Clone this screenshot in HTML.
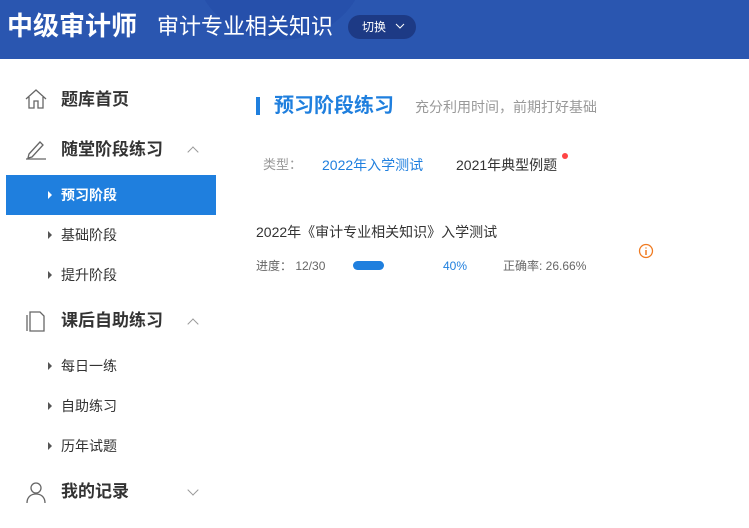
<!DOCTYPE html>
<html><head><meta charset="utf-8"><style>
*{margin:0;padding:0;box-sizing:border-box}
body{width:749px;height:528px;overflow:hidden;background:#fff;font-family:"Liberation Sans","Noto Sans CJK SC",sans-serif;position:relative}
.hdr{position:absolute;left:0;top:0;width:749px;height:59px;background:#2a56b0;overflow:hidden}
.hdr .c1{position:absolute;left:195px;top:-110px;width:170px;height:150px;border-radius:50%;background:#2650ab}
.t1{position:absolute;left:7px;top:9px;color:#fff;font-size:26px;font-weight:bold;line-height:34px}
.t2{position:absolute;left:157px;top:11px;color:#fff;font-size:22px;line-height:32px}
.sw{position:absolute;left:348px;top:15px;width:68px;height:24px;border-radius:12px;background:#1d3a85;color:#fff;font-size:12px;line-height:24px;padding-left:14px}
.sw svg{position:absolute;left:47px;top:8px}
.it{position:absolute;left:0;font-size:17px;color:#333;font-weight:bold;line-height:24px}
.sub{position:absolute;left:6px;width:210px;height:40px;font-size:14px;color:#333;line-height:40px;padding-left:55px}
.sub:before{content:"";position:absolute;left:42px;top:16px;border-left:4px solid #555;border-top:4px solid transparent;border-bottom:4px solid transparent}
.act{background:#1f7fde;color:#fff;font-weight:bold}
.act:before{border-left-color:#fff}
.car{position:absolute;left:189px;width:8px;height:8px;border-left:1px solid #999;border-top:1px solid #999}
</style></head><body>
<div class="hdr"><div class="c1"></div>
<div class="t1">中级审计师</div><div class="t2">审计专业相关知识</div>
<div class="sw">切换<svg width="10" height="7"><path d="M1 1l4 4 4-4" stroke="#fff" fill="none"/></svg></div></div>

<svg style="position:absolute;left:24px;top:88px" width="24" height="22"><path d="M2 11L12 2l10 9M5 9v11h5v-7h4v7h5V9" fill="none" stroke="#666" stroke-width="1.3"/></svg>
<div class="it" style="left:61px;top:88px">题库首页</div>
<svg style="position:absolute;left:24px;top:138px" width="24" height="22"><path d="M5 16l11-12 3 3-11 12-4 1z M2 21h20" fill="none" stroke="#666" stroke-width="1.3"/></svg>
<div class="it" style="left:61px;top:138px">随堂阶段练习</div>
<div class="car" style="top:148px;transform:rotate(45deg)"></div>
<div class="sub act" style="top:175px">预习阶段</div>
<div class="sub" style="top:215px">基础阶段</div>
<div class="sub" style="top:255px">提升阶段</div>
<svg style="position:absolute;left:24px;top:310px" width="24" height="22"><path d="M6 2h10l4 4v15H6z M3 5v16" fill="none" stroke="#666" stroke-width="1.3"/></svg>
<div class="it" style="left:61px;top:309px">课后自助练习</div>
<div class="car" style="top:320px;transform:rotate(45deg)"></div>
<div class="sub" style="top:346px">每日一练</div>
<div class="sub" style="top:386px">自助练习</div>
<div class="sub" style="top:426px">历年试题</div>
<svg style="position:absolute;left:24px;top:480px" width="24" height="24"><circle cx="12" cy="8" r="5" fill="none" stroke="#666" stroke-width="1.3"/><path d="M3 23c0-6 4-9 9-9s9 3 9 9" fill="none" stroke="#666" stroke-width="1.3"/></svg>
<div class="it" style="left:61px;top:480px">我的记录</div>
<div class="car" style="top:486px;transform:rotate(225deg)"></div>

<div style="position:absolute;left:256px;top:97px;width:4px;height:18px;background:#1f7fde"></div>
<div style="position:absolute;left:274px;top:93px;font-size:20px;font-weight:bold;color:#1f7fde;line-height:27px">预习阶段练习</div>
<div style="position:absolute;left:415px;top:98px;font-size:14px;color:#999;line-height:19px">充分利用时间，前期打好基础</div>
<div style="position:absolute;left:263px;top:156px;font-size:13px;color:#999;line-height:18px">类型：</div>
<div style="position:absolute;left:322px;top:156px;font-size:14px;color:#1f7fde;line-height:19px">2022年入学测试</div>
<div style="position:absolute;left:456px;top:156px;font-size:14px;color:#333;line-height:19px">2021年典型例题</div>
<div style="position:absolute;left:562px;top:153px;width:6px;height:6px;border-radius:50%;background:#f44"></div>
<div style="position:absolute;left:256px;top:223px;font-size:14px;color:#333;line-height:19px">2022年《审计专业相关知识》入学测试</div>
<div style="position:absolute;left:256px;top:258px;font-size:12px;color:#666;line-height:16px">进度：&nbsp;12/30</div>
<div style="position:absolute;left:353px;top:261px;width:31px;height:9px;border-radius:5px;background:#1f7fde"></div>
<div style="position:absolute;left:443px;top:258px;font-size:12px;color:#1f7fde;line-height:16px">40%</div>
<div style="position:absolute;left:503px;top:258px;font-size:12px;color:#666;line-height:16px">正确率: 26.66%</div>
<svg style="position:absolute;left:638px;top:243px" width="16" height="16"><circle cx="8" cy="8" r="6.5" fill="none" stroke="#f07a20" stroke-width="1.3"/><path d="M8 7v5M8 4.5v1" stroke="#f07a20" stroke-width="1.5"/></svg>
</body></html>
